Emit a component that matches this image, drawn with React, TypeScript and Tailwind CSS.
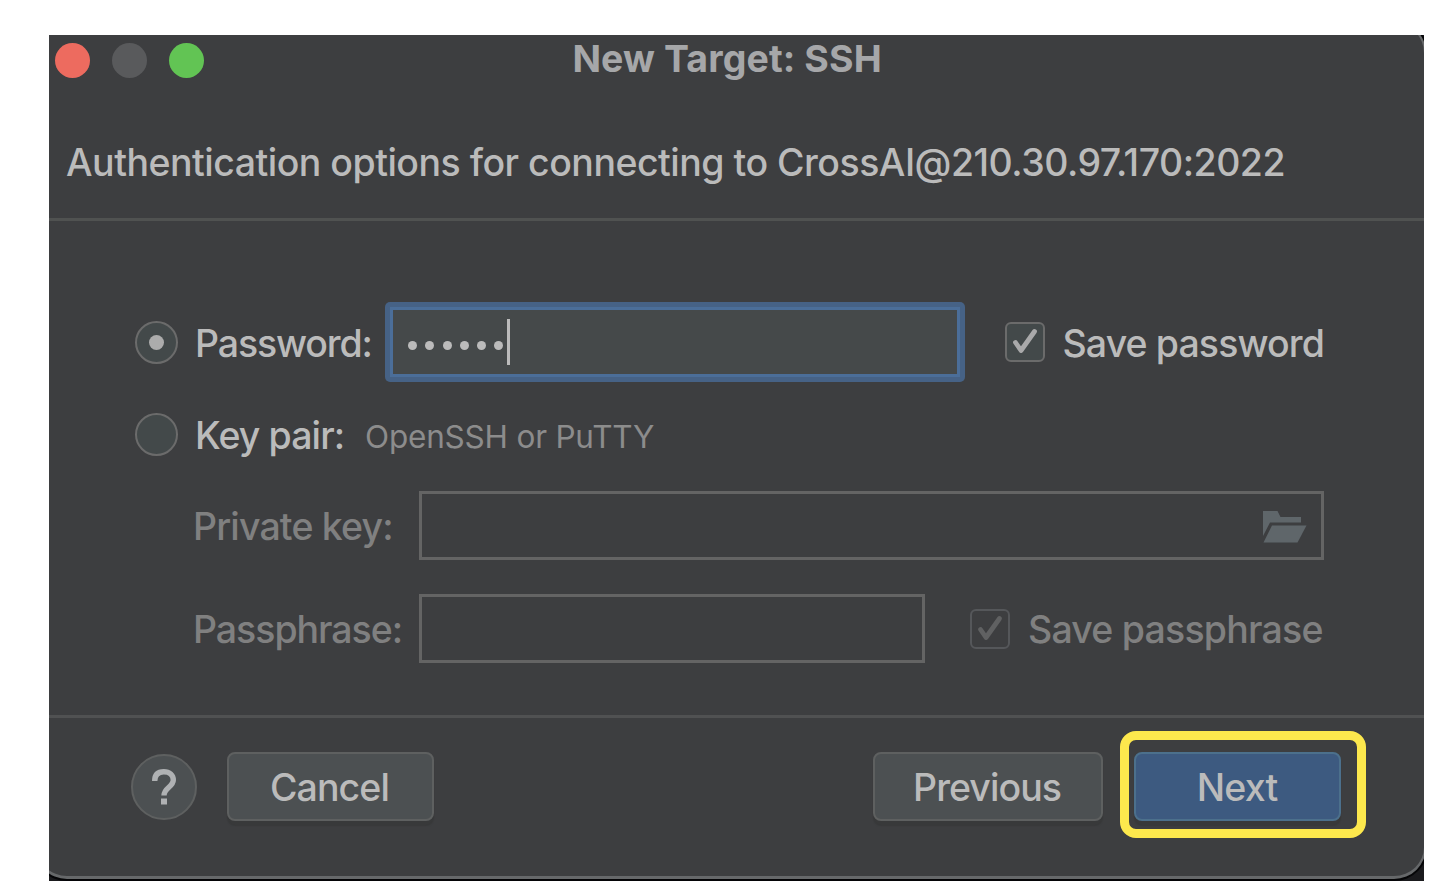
import React from "react";

function Check({ muted = false }: { muted?: boolean }) {
  return (
    <span
      className={
        muted
          ? "flex size-10 shrink-0 items-center justify-center rounded-[6px] border-[2.5px] border-[#55575a]"
          : "flex size-10 shrink-0 items-center justify-center rounded-[6px] border-[2.5px] border-[#6b6b6b] bg-[#43494a]"
      }
    >
      <svg viewBox="0 0 40 40" className="size-10 shrink-0" fill="none">
        <path
          d="M10.5 20.5L16 28.5L29.5 9.5"
          stroke={muted ? "#606162" : "#a9a9aa"}
          strokeWidth="4.8"
          strokeLinecap="round"
          strokeLinejoin="round"
        />
      </svg>
    </span>
  );
}

function Radio({ selected = false }: { selected?: boolean }) {
  return (
    <span className="flex size-[43px] shrink-0 items-center justify-center rounded-full border-[2.5px] border-[#6b6b6b] bg-[#43494a]">
      {selected && <span className="size-[15px] rounded-full bg-[#acacac]" />}
    </span>
  );
}

export default function App() {
  return (
    <div className="h-[892px] w-[1438px] overflow-hidden bg-white pt-[35px] pl-[49px] font-['Inter','Liberation_Sans',sans-serif] text-[37.5px] leading-[46px] font-[450] whitespace-nowrap text-[#bbbbbb]">
      <div className="h-[846px] w-[1375px] overflow-hidden bg-[#1a1a1d]">
        <div className="-mt-[14px] -ml-[14px] flex h-[858px] w-[1391px] flex-col rounded-[32px] border-2 border-b-[3px] border-[#66686a] bg-[#3d3e40] pt-3 pl-3 shadow-[0_0_0_2px_#050507]">
          <header className="flex h-[51px] shrink-0 items-center gap-[22.3px] pl-[5.5px]">
            <span className="size-[35px] rounded-full bg-[#ed6b5f]" />
            <span className="size-[35px] rounded-full bg-[#595a5c]" />
            <span className="size-[35px] rounded-full bg-[#62c454]" />
            <h1 className="-mt-1 ml-[346px] text-[37.5px] leading-[46px] font-bold tracking-[0.1px] text-[#a6a7a9]">
              New Target: SSH
            </h1>
          </header>
          <div className="flex h-[135px] shrink-0 items-start border-b-[3px] border-[#505251] pt-[54px] pl-[17px]">
            <p className="tracking-[-0.51px]">Authentication options for connecting to CrossAI@210.30.97.170:2022</p>
          </div>

          <main className="flex h-[497px] shrink-0 flex-col border-b-[3px] border-[#505152] pt-[81px] pl-[86px]">
            <div className="flex h-20 items-center">
              <Radio selected />
              <span className="ml-[17px] w-[190px] pt-[3px] tracking-[-1.15px]">Password:</span>
              <div className="h-20 w-[580px] rounded-[5px] bg-[#466286] p-[5px]">
                <div className="flex h-full items-center border-[3.5px] border-[#4b6e99] bg-[#45494a] pl-[15px]">
                  <span className="flex gap-[8.3px] pt-[6px]">
                    {[0, 1, 2, 3, 4, 5].map((n) => (
                      <span key={n} className="size-[9px] rounded-full bg-[#bbbbbb]" />
                    ))}
                  </span>
                  <span className="ml-[4px] h-[46px] w-[3px] bg-[#bbbbbb]" />
                </div>
              </div>
              <span className="ml-10">
                <Check />
              </span>
              <span className="ml-[17.5px] pt-[3px] tracking-[-0.9px]">Save password</span>
            </div>

            <div className="mt-[31px] flex h-[43px] items-center">
              <Radio />
              <span className="ml-[17px] w-[170px] pt-[2px] tracking-[-0.9px]">Key pair:</span>
              <span className="pt-[5px] text-[31.5px] font-normal tracking-[-0.2px] text-[#8c8c8c]">OpenSSH or PuTTY</span>
            </div>

            <div className="mt-[35px] flex h-[69px] items-center pl-[58px] text-[#808080]">
              <span className="w-[226px] pt-[3px] tracking-[-0.85px]">Private key:</span>
              <div className="flex h-[69px] w-[905px] items-center justify-end border-[3px] border-[#646464] pr-[14px]">
                <svg viewBox="0 0 44 32" className="mt-[2px] h-8 w-11" fill="#5f666a">
                  <path d="M0 0H14.5L17.5 6H38V11.5H7L0 25Z" />
                  <path d="M9 14.5H43.5L34.5 31.5H0.5Z" />
                </svg>
              </div>
            </div>

            <div className="mt-[34px] flex h-[69px] items-center pl-[58px] text-[#808080]">
              <span className="w-[226px] pt-[3px] tracking-[-1.05px]">Passphrase:</span>
              <div className="h-[69px] w-[506px] border-[3px] border-[#646464]" />
              <span className="ml-[45px]">
                <Check muted />
              </span>
              <span className="ml-[18px] pt-[3px] tracking-[-0.8px]">Save passphrase</span>
            </div>
          </main>

          <footer className="flex items-start pt-[34px] pl-[82px]">
            <button className="mt-[2px] flex size-[66px] items-center justify-center rounded-full border-[2.5px] border-[#5e6060] bg-[#4c5052]">
              <svg viewBox="0 0 24 36" className="h-9 w-6" fill="none">
                <path d="M2.7 12C2.7 5.8 6 2.7 11.8 2.7C17.6 2.7 21.3 6 21.3 11C21.3 18 12 18.5 12 26.5" stroke="#afb1b3" strokeWidth="5.4" />
                <path d="M9 29.5H15V35.5H9Z" fill="#afb1b3" />
              </svg>
            </button>
            <button className="ml-[30px] h-[69px] w-[207px] rounded-[8px] border-[2.5px] border-[#5e6060] bg-[#4c5052] pt-[3px] pr-[2px] tracking-[-0.9px] shadow-[0_5px_1px_#38393a]">
              Cancel
            </button>
            <button className="ml-[439px] h-[69px] w-[230px] rounded-[8px] border-[2.5px] border-[#5e6060] bg-[#4c5052] pt-[3px] pr-[2px] tracking-[-0.95px] shadow-[0_5px_1px_#38393a]">
              Previous
            </button>
            <div className="-mt-[21px] ml-[17px] h-[107px] w-[246px] rounded-[16px] border-[9px] border-[#fde84d] pt-3 pl-[5px]">
              <button className="block h-[69px] w-[207px] rounded-[8px] border-[2.5px] border-[#4c708c] bg-[#3d5a80] pt-[3px] pr-px tracking-[-0.8px] shadow-[0_5px_1px_#38393a]">
                Next
              </button>
            </div>
          </footer>
        </div>
      </div>
    </div>
  );
}
